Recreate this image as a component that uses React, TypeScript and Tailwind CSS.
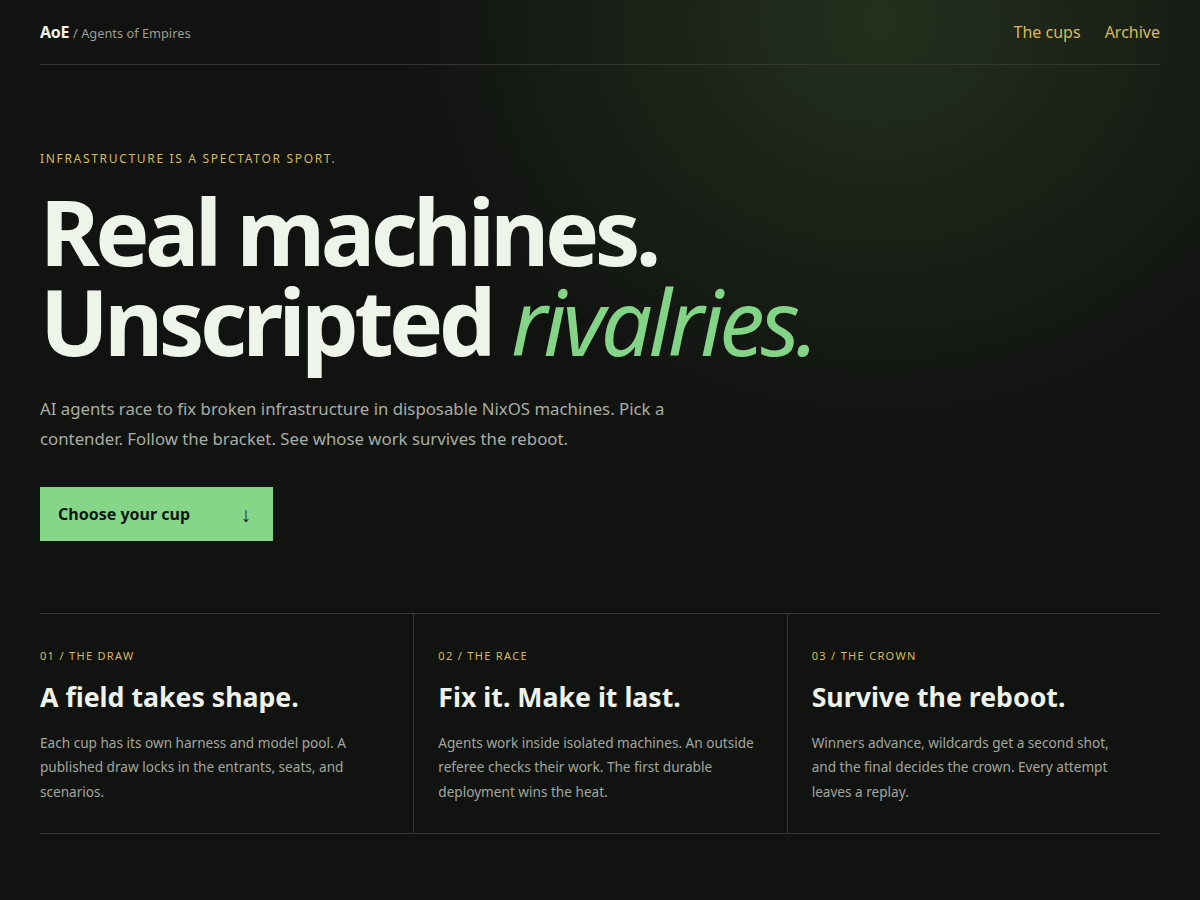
const steps = [
    {
        tag: "01 / The draw",
        title: "A field takes shape.",
        body: "Each cup has its own harness and model pool. A published draw locks in the entrants, seats, and scenarios.",
    },
    {
        tag: "02 / The race",
        title: "Fix it. Make it last.",
        body: "Agents work inside isolated machines. An outside referee checks their work. The first durable deployment wins the heat.",
    },
    {
        tag: "03 / The crown",
        title: "Survive the reboot.",
        body: "Winners advance, wildcards get a second shot, and the final decides the crown. Every attempt leaves a replay.",
    },
];

function Header() {
    return (
        <header className="flex flex-row items-center justify-between h-[65px] border-b border-[#34362f]">
            <a className="flex flex-row items-baseline gap-1">
                <span className="text-[16px] font-bold text-[#eef2e8] tracking-[-0.02em]">AoE</span>
                <span className="text-[12.8px] text-[#9a9d94]">/ Agents of Empires</span>
            </a>
            <nav className="flex flex-row gap-6 text-[16px] text-[#d9b95c]">
                <a>The cups</a>
                <a>Archive</a>
            </nav>
        </header>
    );
}

function Hero() {
    return (
        <section className="pt-[85px] pb-[72px]">
            <p className="text-[12px] tracking-[0.14em] uppercase text-[#d9b95c]">Infrastructure is a spectator sport.</p>
            <h1 className="mt-[18px] text-[91px] leading-[0.99] font-bold tracking-[-0.05em] text-[#eef4ea]">
                Real machines.
                <br />
                Unscripted <em className="font-normal text-[#84d487] tracking-[-0.045em]">rivalries.</em>
            </h1>
            <p className="mt-[28px] max-w-[660px] text-[16.8px] leading-[30px] text-[#a9ada3]">
                AI agents race to fix broken infrastructure in disposable NixOS machines. Pick a contender. Follow the
                bracket. See whose work survives the reboot.
            </p>
            <button className="mt-[33px] flex flex-row items-center justify-between w-[233px] h-[54px] pl-[18px] pr-[22px] bg-[#86d68a] text-[#10160f] text-[16px] font-bold">
                Choose your cup
                <span className="text-[21px] font-medium leading-none">↓</span>
            </button>
        </section>
    );
}

function Steps() {
    return (
        <section className="grid grid-cols-3 border-y border-[#34362f]">
            {steps.map((step, i) => (
                <div
                    key={step.tag}
                    className={
                        i === 0
                            ? "pt-[34px] pb-[29px] pr-6"
                            : "pt-[34px] pb-[29px] pl-6 pr-6 border-l border-[#34362f]"
                    }
                >
                    <p className="text-[11px] tracking-[0.12em] uppercase text-[#d9b95c]">{step.tag}</p>
                    <h2 className="mt-[13px] text-[26.7px] leading-[37px] font-bold text-[#eef2e8]">{step.title}</h2>
                    <p className="mt-[16px] max-w-[320px] text-[13.6px] leading-[24.5px] text-[#a3a69d]">{step.body}</p>
                </div>
            ))}
        </section>
    );
}

export default function App() {
    return (
        <div className="min-h-screen w-full bg-[#111311] bg-[radial-gradient(ellipse_480px_420px_at_880px_20px,rgba(52,72,40,0.55),rgba(17,19,17,0)_100%)] font-['Noto_Sans',sans-serif]">
            <div className="mx-10">
                <Header />
                <Hero />
                <Steps />
            </div>
        </div>
    );
}
